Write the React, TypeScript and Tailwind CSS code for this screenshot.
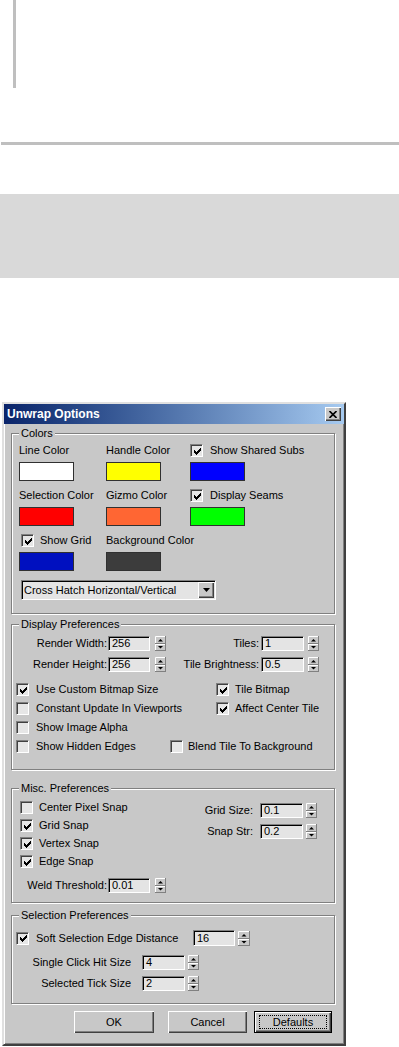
import React from "react";

// classic win98 check mark, 7x7 pixels
const checkPixels = [
  [6, 0, 1],
  [5, 1, 2],
  [0, 2, 1],
  [4, 2, 3],
  [0, 3, 2],
  [3, 3, 3],
  [0, 4, 5],
  [1, 5, 3],
  [2, 6, 1],
];

const CheckMark = () => (
  <svg width="7" height="7" viewBox="0 0 7 7">
    {checkPixels.map(([x, y, w], i) => (
      <rect key={i} x={x} y={y} width={w} height={1} fill="#000" />
    ))}
  </svg>
);

const CheckBox = ({ checked = false }: { checked?: boolean }) => (
  <span className="flex h-[13px] w-[13px] shrink-0 items-center justify-center border border-t-[#808080] border-l-[#808080] border-r-white border-b-white bg-[#e6e6e6] pl-[1px] pt-[1px] shadow-[inset_1px_1px_0_#404040]">
    {checked && <CheckMark />}
  </span>
);

const Spinner = ({ w = 11 }: { w?: number }) => {
  const c = w / 2;
  return (
    <svg width={w} height={15} viewBox={`0 0 ${w} 15`} className="shrink-0">
      <rect width={w} height={15} fill="#c8c8c8" />
      <path d={`M0 0H${w}M0 0V7`} stroke="#fff" strokeWidth="1" transform="translate(0.5 0.5)" />
      <path d={`M0 7.5H${w}M${w - 0.5} 0V7.5`} stroke="#808080" strokeWidth="1" />
      <path d={`M0 8.5H${w}M0.5 8V15`} stroke="#fff" strokeWidth="1" />
      <path d={`M0 14.5H${w}M${w - 0.5} 8V15`} stroke="#808080" strokeWidth="1" />
      <polygon points={`${c - 2.5},5.5 ${c + 2.5},5.5 ${c},3`} fill="#000" />
      <polygon points={`${c - 2.5},10 ${c + 2.5},10 ${c},12.5`} fill="#000" />
    </svg>
  );
};

const Field = ({ value, className }: { value: string; className: string }) => (
  <span
    className={`flex shrink-0 items-center border border-t-[#808080] border-l-[#808080] border-r-white border-b-white bg-[#e4e4e4] pl-[3px] leading-[13px] shadow-[inset_1px_1px_0_#000] ${className}`}
  >
    {value}
  </span>
);

const Swatch = ({ color }: { color: string }) => (
  <div className={`mt-[5px] h-[19px] w-[55px] border border-[#303030] ${color}`} />
);

const Group = ({
  title,
  className,
  children,
}: {
  title: string;
  className: string;
  children: React.ReactNode;
}) => (
  <div
    className={`w-[324px] border border-[#808080] shadow-[inset_1px_1px_0_#fff,1px_1px_0_#fff] ${className}`}
  >
    <div className="ml-[7px] -mt-[7px] w-fit bg-[#c8c8c8] px-[2px] leading-[13px]">{title}</div>
    {children}
  </div>
);

const Button = ({
  label,
  className,
  isDefault = false,
}: {
  label: string;
  className: string;
  isDefault?: boolean;
}) => (
  <div
    className={`flex h-[22px] items-center justify-center ${className} ${
      isDefault
        ? "border border-black shadow-[inset_1px_1px_0_#fff,inset_-1px_-1px_0_#404040,inset_-2px_-2px_0_#808080]"
        : "shadow-[inset_1px_1px_0_#fff,inset_-1px_-1px_0_#404040,inset_-2px_-2px_0_#808080]"
    }`}
  >
    {isDefault ? (
      <span className="flex h-[14px] w-[68px] items-center justify-center border border-dotted border-black">
        {label}
      </span>
    ) : (
      label
    )}
  </div>
);

export default function App() {
  return (
    <div className="min-h-[1047px] bg-white font-['Liberation_Sans',Arial,sans-serif] text-[11px] text-black">
      {/* page decorations above the dialog */}
      <div className="ml-[13px] h-[88px] w-[3px] bg-[#bfbfbf]" />
      <div className="ml-[1px] mt-[54px] h-[3px] bg-[#bfbfbf]" />
      <div className="mt-[49px] h-[84px] bg-[#d9d9d9]" />

      {/* Unwrap Options dialog */}
      <div className="ml-[2px] mt-[124px] h-[644px] w-[344px] border-2 border-t-[#e0e0e0] border-l-[#e0e0e0] border-r-[#404040] border-b-[#404040] bg-[#c8c8c8] shadow-[inset_1px_1px_0_#fff,inset_-1px_-1px_0_#808080]">
        <div className="flex h-[20px] items-center justify-between bg-gradient-to-r from-[#0a246a] to-[#a6caf0] pl-[3px] pr-[3px]">
          <span className="text-[12px] font-bold text-white">Unwrap Options</span>
          <span className="flex h-[14px] w-[16px] items-center justify-center bg-[#c8c8c8] shadow-[inset_1px_1px_0_#fff,inset_-1px_-1px_0_#404040,inset_-2px_-2px_0_#808080]">
            <svg width="8" height="7" viewBox="0 0 8 7">
              <path d="M0.5 0 L7.5 7 M7.5 0 L0.5 7" stroke="#000" strokeWidth="1.6" />
            </svg>
          </span>
        </div>

        <div className="pl-[7px]">
          {/* Colors */}
          <Group title="Colors" className="mt-[9px] h-[181px]">
            <div className="mt-[4px] grid grid-cols-[87px_84px_auto] gap-y-[8px] whitespace-nowrap pl-[7px]">
              <div>
                <div className="leading-[13px]">Line Color</div>
                <Swatch color="bg-white" />
              </div>
              <div>
                <div className="leading-[13px]">Handle Color</div>
                <Swatch color="bg-[#ffff00]" />
              </div>
              <div>
                <div className="flex h-[13px] items-center">
                  <CheckBox checked />
                  <span className="ml-[7px]">Show Shared Subs</span>
                </div>
                <Swatch color="bg-[#0000ff]" />
              </div>
              <div>
                <div className="leading-[13px]">Selection Color</div>
                <Swatch color="bg-[#ff0000]" />
              </div>
              <div>
                <div className="leading-[13px]">Gizmo Color</div>
                <Swatch color="bg-[#ff6633]" />
              </div>
              <div>
                <div className="flex h-[13px] items-center">
                  <CheckBox checked />
                  <span className="ml-[7px]">Display Seams</span>
                </div>
                <Swatch color="bg-[#00ff00]" />
              </div>
              <div>
                <div className="ml-[2px] flex h-[13px] items-center">
                  <CheckBox checked />
                  <span className="ml-[6px]">Show Grid</span>
                </div>
                <Swatch color="bg-[#0010c0]" />
              </div>
              <div>
                <div className="leading-[13px]">Background Color</div>
                <Swatch color="bg-[#3c3c3c]" />
              </div>
            </div>
            <div className="ml-[9px] mt-[9px] flex h-[20px] w-[195px] items-center justify-between border border-t-[#808080] border-l-[#808080] border-r-white border-b-white bg-[#e4e4e4] pl-[2px] pr-[1px] shadow-[inset_1px_1px_0_#000]">
              <span>Cross Hatch Horizontal/Vertical</span>
              <span className="flex h-[16px] w-[16px] items-center justify-center bg-[#c8c8c8] shadow-[inset_1px_1px_0_#fff,inset_-1px_-1px_0_#404040,inset_-2px_-2px_0_#808080]">
                <svg width="7" height="4" viewBox="0 0 7 4">
                  <polygon points="0,0 7,0 3.5,4" fill="#000" />
                </svg>
              </span>
            </div>
          </Group>

          {/* Display Preferences */}
          <Group title="Display Preferences" className="mt-[10px] h-[146px]">
            <div className="mt-[5px] flex h-[15px] items-center">
              <span className="w-[95px] text-right">Render Width:</span>
              <Field value="256" className="ml-[1px] h-[15px] w-[42px]" />
              <span className="ml-[5px]"><Spinner /></span>
              <span className="w-[93px] text-right">Tiles:</span>
              <Field value="1" className="ml-[2px] h-[15px] w-[43px]" />
              <span className="ml-[4px]"><Spinner /></span>
            </div>
            <div className="mt-[6px] flex h-[15px] items-center">
              <span className="w-[95px] text-right">Render Height:</span>
              <Field value="256" className="ml-[1px] h-[15px] w-[42px]" />
              <span className="ml-[5px]"><Spinner /></span>
              <span className="w-[93px] text-right">Tile Brightness:</span>
              <Field value="0.5" className="ml-[2px] h-[15px] w-[43px]" />
              <span className="ml-[4px]"><Spinner /></span>
            </div>
            <div className="mt-[11px] flex flex-col gap-[6px] pl-[4px]">
              <div className="flex h-[13px] items-center">
                <div className="flex w-[200px] items-center">
                  <CheckBox checked />
                  <span className="ml-[7px]">Use Custom Bitmap Size</span>
                </div>
                <CheckBox checked />
                <span className="ml-[6px]">Tile Bitmap</span>
              </div>
              <div className="flex h-[13px] items-center">
                <div className="flex w-[200px] items-center">
                  <CheckBox />
                  <span className="ml-[7px]">Constant Update In Viewports</span>
                </div>
                <CheckBox checked />
                <span className="ml-[6px]">Affect Center Tile</span>
              </div>
              <div className="flex h-[13px] items-center">
                <CheckBox />
                <span className="ml-[7px]">Show Image Alpha</span>
              </div>
              <div className="flex h-[13px] items-center">
                <div className="flex w-[154px] items-center">
                  <CheckBox />
                  <span className="ml-[7px]">Show Hidden Edges</span>
                </div>
                <CheckBox />
                <span className="ml-[5px]">Blend Tile To Background</span>
              </div>
            </div>
          </Group>

          {/* Misc. Preferences */}
          <Group title="Misc. Preferences" className="mt-[18px] h-[115px]">
            <div className="mt-[6px] flex pl-[8px]">
              <div className="flex w-[180px] flex-col gap-[5px]">
                <div className="flex h-[13px] items-center">
                  <CheckBox />
                  <span className="ml-[6px]">Center Pixel Snap</span>
                </div>
                <div className="flex h-[13px] items-center">
                  <CheckBox checked />
                  <span className="ml-[6px]">Grid Snap</span>
                </div>
                <div className="flex h-[13px] items-center">
                  <CheckBox checked />
                  <span className="ml-[6px]">Vertex Snap</span>
                </div>
                <div className="flex h-[13px] items-center">
                  <CheckBox checked />
                  <span className="ml-[6px]">Edge Snap</span>
                </div>
              </div>
              <div className="flex flex-col gap-[6px] pt-[2px]">
                <div className="flex h-[15px] items-center">
                  <span className="w-[53px] text-right">Grid Size:</span>
                  <Field value="0.1" className="ml-[7px] h-[15px] w-[43px]" />
                  <span className="ml-[3px]"><Spinner /></span>
                </div>
                <div className="flex h-[15px] items-center">
                  <span className="w-[53px] text-right">Snap Str:</span>
                  <Field value="0.2" className="ml-[7px] h-[15px] w-[43px]" />
                  <span className="ml-[3px]"><Spinner /></span>
                </div>
              </div>
            </div>
            <div className="mt-[10px] flex h-[15px] items-center">
              <span className="w-[95px] text-right">Weld Threshold:</span>
              <Field value="0.01" className="ml-[1px] h-[15px] w-[42px]" />
              <span className="ml-[5px]"><Spinner /></span>
            </div>
          </Group>

          {/* Selection Preferences */}
          <Group title="Selection Preferences" className="mt-[12px] h-[89px]">
            <div className="mt-[8px] flex h-[16px] items-center pl-[4px]">
              <CheckBox checked />
              <span className="ml-[7px] w-[150px]">Soft Selection Edge Distance</span>
              <Field value="16" className="ml-[7px] h-[16px] w-[42px]" />
              <span className="ml-[3px]"><Spinner w={12} /></span>
            </div>
            <div className="mt-[9px] flex h-[15px] items-center">
              <span className="w-[119px] text-right">Single Click Hit Size</span>
              <Field value="4" className="ml-[11px] h-[15px] w-[43px]" />
              <span className="ml-[3px]"><Spinner /></span>
            </div>
            <div className="mt-[6px] flex h-[15px] items-center">
              <span className="w-[119px] text-right">Selected Tick Size</span>
              <Field value="2" className="ml-[11px] h-[15px] w-[43px]" />
              <span className="ml-[3px]"><Spinner /></span>
            </div>
          </Group>

          <div className="mt-[7px] flex">
            <Button label="OK" className="ml-[63px] w-[80px]" />
            <Button label="Cancel" className="ml-[14px] w-[79px]" />
            <Button label="Defaults" className="ml-[7px] w-[78px]" isDefault />
          </div>
        </div>
      </div>
    </div>
  );
}
